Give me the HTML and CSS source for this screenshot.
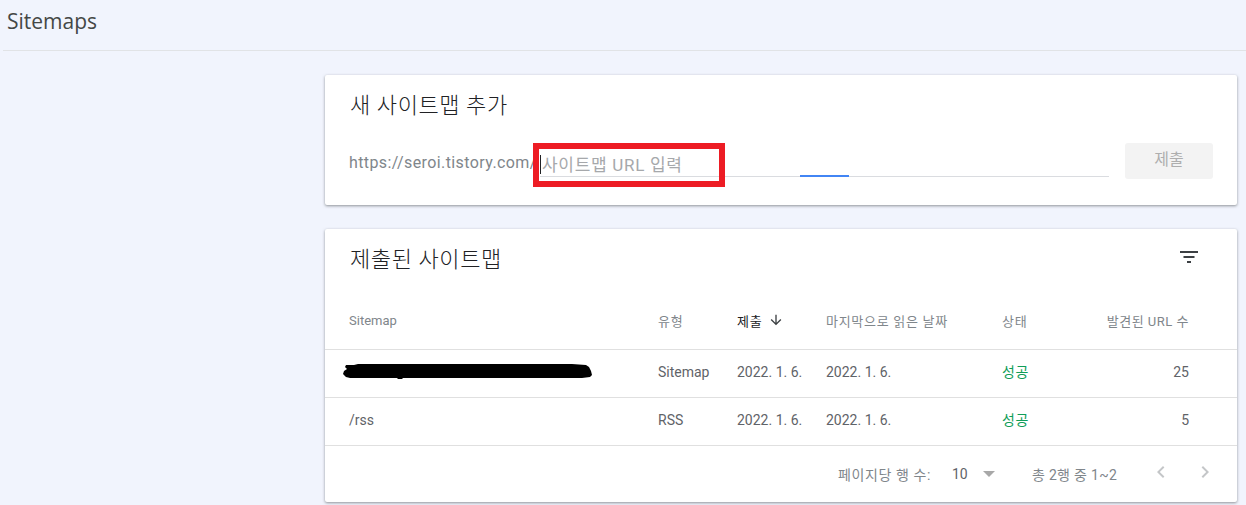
FILE: index.html
```html
<!DOCTYPE html>
<html lang="ko">
<head>
<meta charset="utf-8">
<title>Sitemaps</title>
<link rel="stylesheet" href="styles.css">
</head>
<body>
<header class="topbar"><h1 class="page-title">Sitemaps</h1></header>
<main class="content">
  <section class="card add-card">
    <h2 class="card-title">새 사이트맵 추가</h2>
    <div class="add-row">
      <span class="prefix">https://seroi.tistory.com/</span>
      <div class="field">
        <span class="caret"></span><span class="placeholder">사이트맵 URL 입력</span>
        <span class="field-focus"></span>
      </div>
      <button class="submit" type="button">제출</button>
    </div>
    <div class="highlight"></div>
  </section>
  <section class="card list-card">
    <div class="list-head">
      <h2 class="card-title">제출된 사이트맵</h2>
      <svg class="filter-icon" width="24" height="24" viewBox="0 0 24 24"><path d="M3 6h18v2H3zM6.5 11h11v2h-11zM10 16h4v2h-4z"/></svg>
    </div>
    <div class="row row-head">
      <span class="latin">Sitemap</span>
      <span>유형</span>
      <span class="sorted">제출<svg class="sort-icon" width="16" height="16" viewBox="0 0 24 24"><path d="M20 12l-1.41-1.41L13 16.17V4h-2v12.17l-5.58-5.59L4 12l8 8 8-8z"/></svg></span>
      <span>마지막으로 읽은 날짜</span>
      <span>상태</span>
      <span class="num url-count">발견된 URL 수</span>
    </div>
    <div class="row">
      <span class="redacted-cell"><svg class="redaction" width="250" height="16" viewBox="0 0 250 16"><path d="M3 1h8l4-1h214l14 1 3 2 2 4 1 4-2 2-8 1H60l-1 1H55l-1-1H7l-4-1-3-3 1-3 3-2-2-2z"/></svg></span>
      <span>Sitemap</span>
      <span>2022. 1. 6.</span>
      <span>2022. 1. 6.</span>
      <span class="ok">성공</span>
      <span class="num">25</span>
    </div>
    <div class="row">
      <span>/rss</span>
      <span>RSS</span>
      <span>2022. 1. 6.</span>
      <span>2022. 1. 6.</span>
      <span class="ok">성공</span>
      <span class="num">5</span>
    </div>
    <div class="pager">
      <span class="rows-label">페이지당 행 수:</span>
      <span class="rows-value">10</span>
      <span class="rows-arrow"></span>
      <span class="range">총 2행 중 1~2</span>
      <svg class="chev" width="24" height="24" viewBox="0 0 24 24"><path d="M15.4 7.4 14 6l-6 6 6 6 1.4-1.4L10.8 12z"/></svg>
      <svg class="chev chev-next" width="24" height="24" viewBox="0 0 24 24"><path d="M8.6 7.4 10 6l6 6-6 6-1.4-1.4L13.2 12z"/></svg>
    </div>
  </section>
</main>
</body>
</html>
```
FILE: styles.css
```css
* { box-sizing: border-box; }
html, body { margin: 0; height: 505px; overflow: hidden; }
body {
  background: #f1f4fd;
  font-family: Roboto, "Noto Sans CJK KR", sans-serif;
  color: #3c4043;
}
.topbar {
  height: 51px;
  margin-left: 3px;
  border-bottom: 1px solid #e1e3e6;
  padding: 9px 0 0 4px;
}
.page-title {
  margin: 0;
  font: 400 21px/24px "Open Sans", Roboto, sans-serif;
  color: #444746;
}
.content {
  width: 912px;
  margin: 24px 0 0 325px;
  display: flex;
  flex-direction: column;
  gap: 24px;
}
.card {
  position: relative;
  background: #fff;
  border-radius: 2px;
  box-shadow: 0 1px 3px rgba(60, 64, 67, .55);
}
.add-card { height: 130px; padding: 16px 24px 0 25px; }
.list-card { height: 273px; }
.card-title {
  margin: 0;
  font: 300 22px/30px Roboto, "Noto Sans CJK KR", sans-serif;
  letter-spacing: .6px;
  color: #202124;
}
.add-row { display: flex; height: 36px; margin-top: 22px; }
.prefix {
  width: 191px;
  margin-left: -1px;
  padding-top: 9px;
  font-size: 16px;
  line-height: 22px;
  letter-spacing: .4px;
  color: #80868b;
  white-space: nowrap;
}
.field {
  position: relative;
  flex: none;
  width: 569px;
  height: 34px;
  border-bottom: 1px solid #dadce0;
  padding-top: 11px;
  display: flex;
}
.caret { width: 1px; height: 19px; margin-top: 1px; background: #202124; }
.placeholder { margin-left: 1px; font-size: 17px; line-height: 22px; letter-spacing: .7px; color: #a6a8ab; }
.field-focus {
  position: absolute;
  left: 260px;
  bottom: -1px;
  width: 49px;
  height: 2px;
  background: #4285f4;
}
.submit {
  flex: none;
  width: 88px;
  height: 36px;
  margin-left: 16px;
  border: 0;
  border-radius: 3px;
  background: #f3f3f3;
  color: #aeaeae;
  font: 400 16px/30px Roboto, "Noto Sans CJK KR", sans-serif;
  padding: 0 0 2px;
}
.highlight {
  position: absolute;
  left: 208px;
  top: 68px;
  width: 192px;
  height: 44px;
  border: 6px solid #ed1c24;
}
.list-head {
  display: flex;
  justify-content: space-between;
  height: 69px;
  padding: 16px 36px 0 25px;
}
.filter-icon { fill: #3c4043; }
.row {
  display: grid;
  grid-template-columns: 309px 79px 89px 176px 52px 135px;
  align-items: center;
  height: 48px;
  padding: 0 48px 3px 24px;
  border-bottom: 1px solid #e0e0e0;
  font-size: 14px;
  color: #5f6368;
}
.row-head {
  height: 52px;
  padding-bottom: 7px;
  font-size: 13px;
  letter-spacing: .7px;
  color: #80868b;
}
.latin { letter-spacing: 0; }
.url-count { letter-spacing: .5px; }
.sorted { display: flex; align-items: center; gap: 6px; color: #202124; }
.sort-icon { fill: #3c4043; }
.num { text-align: right; }
.ok { color: #0f9d58; letter-spacing: .5px; margin-bottom: 2px; }
.redacted-cell { display: block; height: 16px; margin-left: -6px; }
.redaction { display: block; fill: #000; }
.pager {
  display: flex;
  align-items: center;
  height: 56px;
  padding: 0 20px 0 513px;
  font-size: 14px;
  color: #80868b;
}
.rows-label { width: 114px; letter-spacing: .6px; white-space: nowrap; }
.rows-value { width: 31px; font-size: 14px; color: #5f6368; }
.rows-arrow {
  width: 0;
  height: 0;
  border-left: 6px solid transparent;
  border-right: 6px solid transparent;
  border-top: 6px solid #a8a8a8;
}
.range { margin-left: 37px; width: 117px; letter-spacing: .3px; white-space: nowrap; }
.chev { fill: #c4c6c8; margin-bottom: 4px; }
.chev-next { margin-left: 20px; }
```
